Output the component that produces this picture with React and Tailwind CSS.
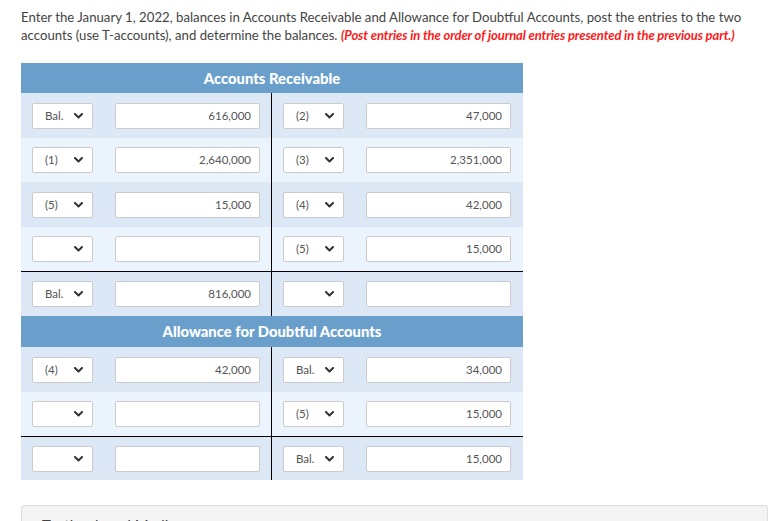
import React from 'react';

const Chevron = () => (
  <svg width="9" height="6" viewBox="0 0 9 6" className="shrink-0">
    <polyline points="1,1 4.5,4.5 8,1" fill="none" stroke="#333" strokeWidth="2" strokeLinecap="round" strokeLinejoin="round" />
  </svg>
);

const Select = ({ value }) => (
  <div className="w-[61px] h-[26px] bg-white border border-[#cbcbcb] rounded-[2px] flex items-center justify-between pl-[12px] pr-[9px] text-[11.5px] text-[#555]">
    <span>{value}</span>
    <Chevron />
  </div>
);

const Amount = ({ value }) => (
  <div className="w-[145px] h-[26px] bg-white border border-[#cbcbcb] rounded-[2px] flex items-center justify-end pr-[8px] text-[11.5px] text-[#555]">
    {value}
  </div>
);

const Row = ({ row, light, height, topLine }) => (
  <div
    className={`flex ${light ? 'bg-[#ebf3fd]' : 'bg-[#dde8f6]'} ${topLine ? 'border-t border-black' : ''}`}
    style={{ height }}
  >
    <div className="w-[251px] border-r border-black flex items-center pl-[11px] gap-[22px]">
      <Select value={row[0]} />
      <Amount value={row[1]} />
    </div>
    <div className="flex-1 flex items-center pl-[11px] gap-[22px]">
      <Select value={row[2]} />
      <Amount value={row[3]} />
    </div>
  </div>
);

const Header = ({ title, height }) => (
  <div className="bg-[#6a9fcb] flex items-center justify-center text-white font-black text-[14.8px]" style={{ height }}>
    {title}
  </div>
);

export default function App() {
  return (
    <div className="w-[777px] h-[521px] overflow-hidden bg-white font-['Lato','Noto_Sans',sans-serif] text-[#444]">
      <div className="px-[21px] pt-[8px]">
        <p className="text-[13.2px] leading-[18px] text-[#444]">
          Enter the January 1, 2022, balances in Accounts Receivable and Allowance for Doubtful Accounts, post the entries to the two accounts (use T-accounts), and determine the balances.{' '}
          <span className="text-[#ff1a1a] font-bold italic text-[13px] tracking-[-0.1px]">
            (Post entries in the order of journal entries presented in the previous part.)
          </span>
        </p>

        <div className="w-[502px] mt-[19px]">
          <Header title="Accounts Receivable" height={30} />
          <Row row={['Bal.', '616,000', '(2)', '47,000']} height={45} />
          <Row row={['(1)', '2,640,000', '(3)', '2,351,000']} light height={44} />
          <Row row={['(5)', '15,000', '(4)', '42,000']} height={45} />
          <Row row={['', '', '(5)', '15,000']} light height={44} />
          <Row row={['Bal.', '816,000', '', '']} height={45} topLine />

          <Header title="Allowance for Doubtful Accounts" height={31} />
          <Row row={['(4)', '42,000', 'Bal.', '34,000']} height={45} />
          <Row row={['', '', '(5)', '15,000']} light height={44} />
          <Row row={['', '', 'Bal.', '15,000']} height={44} topLine />
        </div>
      </div>

      <div className="ml-[21px] mr-[9px] mt-[25px] h-[40px] bg-[#f4f4f4] border border-[#dddddd] rounded-[3px] pl-[20px] pt-[10px] text-[15px] leading-[18px] text-[#444]">
        Textbook and Media
      </div>
    </div>
  );
}
